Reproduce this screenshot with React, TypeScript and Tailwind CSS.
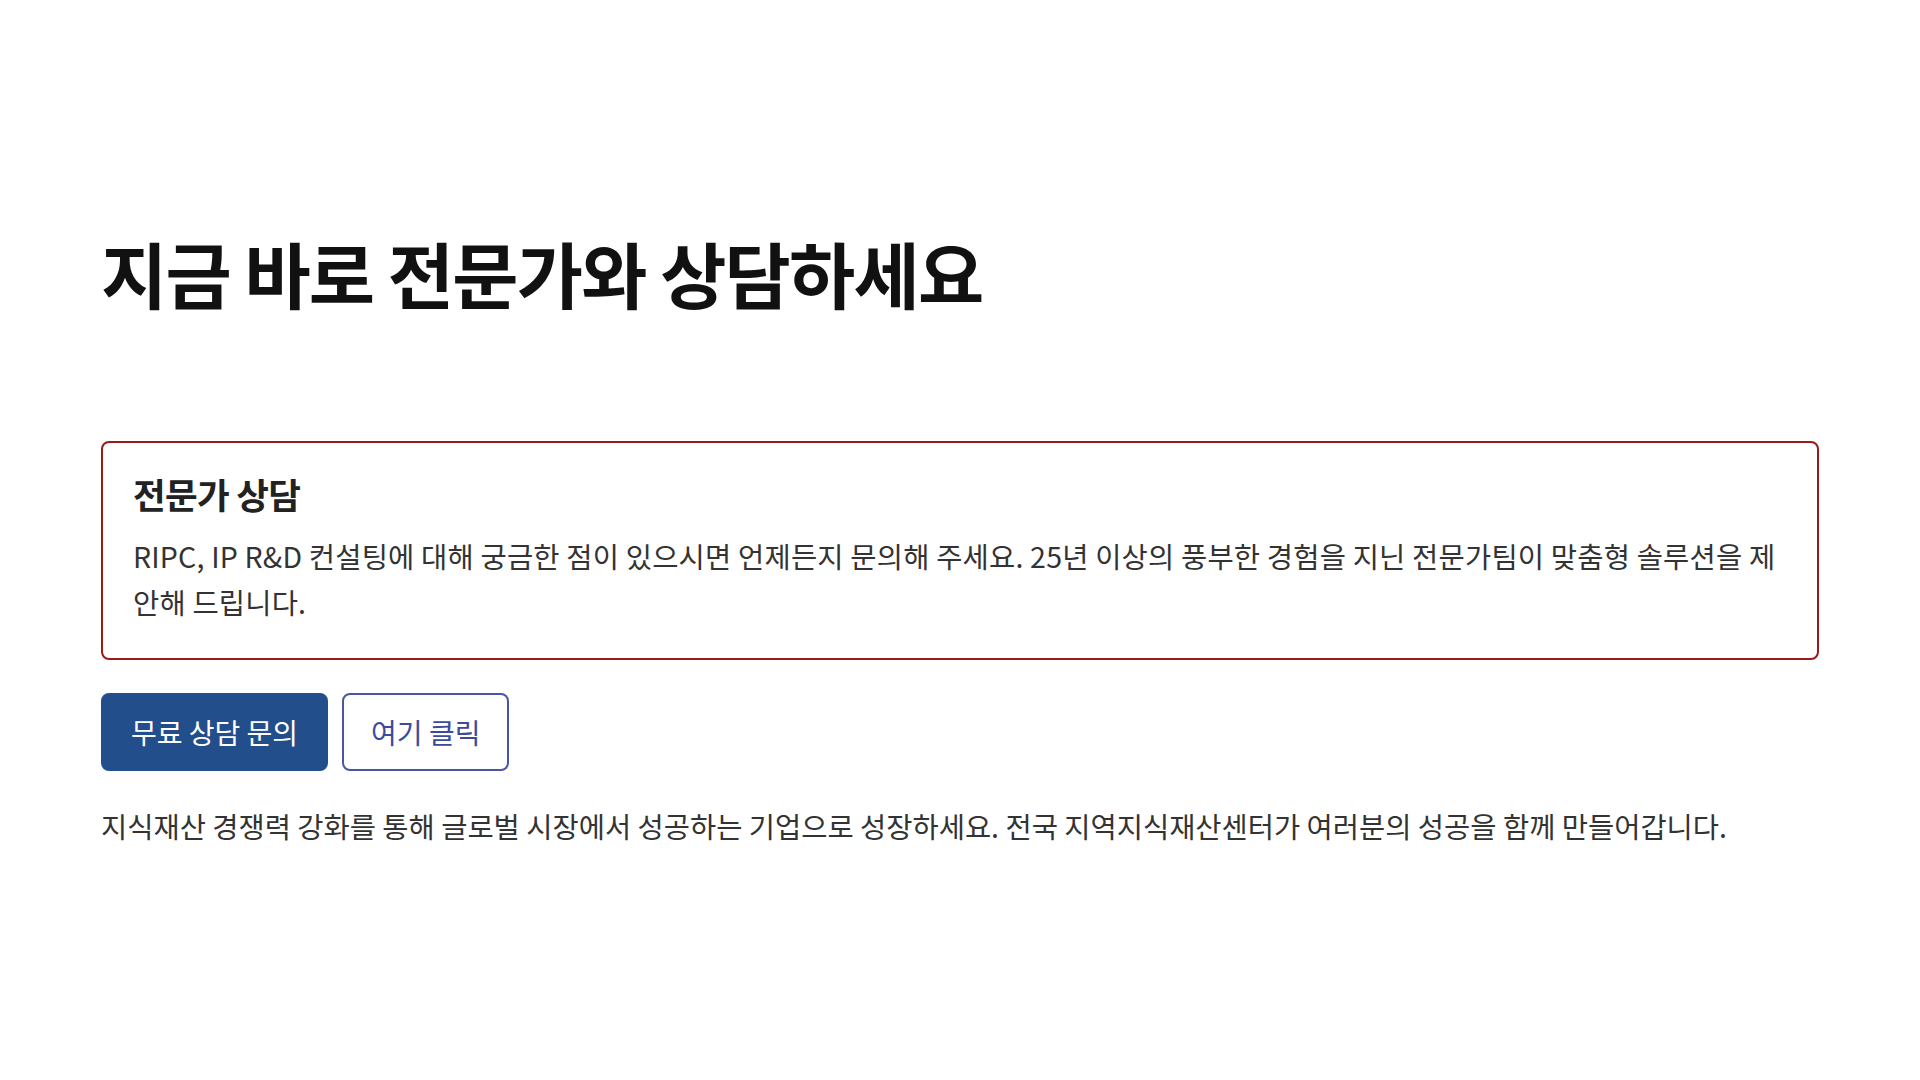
export default function App() {
  return (
    <div className="min-h-screen bg-white font-['Noto_Sans_CJK_KR','Noto_Sans',sans-serif]">
      <main className="px-[101px] pt-[236px]">
        {/* Page title */}
        <h1 className="text-[72px] leading-none font-bold tracking-[-0.025em] text-[#111]">
          지금 바로 전문가와 상담하세요
        </h1>

        {/* Consultation card */}
        <section className="mt-[133px] rounded-lg border-2 border-[#9b1a1a] px-[30px] pt-[29px] pb-[34px]">
          <h2 className="text-[35.5px] leading-[44px] font-bold tracking-[-0.02em] text-[#222]">
            전문가 상담
          </h2>
          <p className="mt-[17px] text-[28.5px] leading-[45.5px] tracking-[0.2px] text-[#333]">
            RIPC, IP R&amp;D 컨설팅에 대해 궁금한 점이 있으시면 언제든지 문의해 주세요. 25년 이상의 풍부한 경험을 지닌
            전문가팀이 맞춤형 솔루션을 제안해 드립니다.
          </p>
        </section>

        {/* Actions */}
        <div className="mt-[33px] flex items-center gap-[14px]">
          <button className="h-[78px] rounded-lg border-2 border-[#224e8c] bg-[#224e8c] px-[28px] text-[28px] text-white">
            무료 상담 문의
          </button>
          <button className="h-[78px] rounded-lg border-2 border-[#4a55a8] bg-white px-[27px] text-[28px] text-[#3c4a9c]">
            여기 클릭
          </button>
        </div>

        <p className="mt-[32px] text-[28.5px] leading-[45px] text-[#333]">
          지식재산 경쟁력 강화를 통해 글로벌 시장에서 성공하는 기업으로 성장하세요. 전국 지역지식재산센터가 여러분의 성공을
          함께 만들어갑니다.
        </p>
      </main>
    </div>
  );
}
